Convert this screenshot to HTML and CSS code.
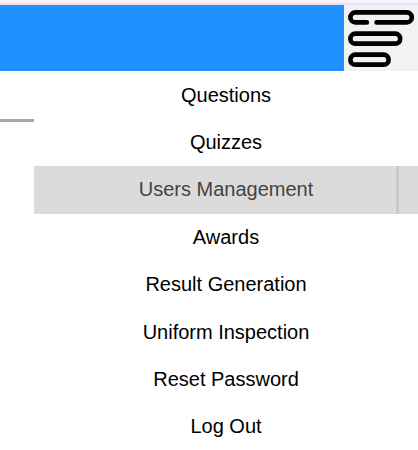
FILE: index.html
```html
<!DOCTYPE html>
<html lang="en">
<head>
<meta charset="utf-8">
<title>Menu</title>
<link rel="stylesheet" href="styles.css">
</head>
<body>
<div class="top-edge"></div>
<header class="header">
  <button class="menu-button" aria-label="Menu">
    <svg width="74" height="66" viewBox="344 5 74 66" fill="none" stroke="#000" stroke-width="4.7" stroke-linecap="round">
      <path d="M366.8 22.4H355.4A5 5 0 0 1 355.4 12.4H406.8A5 5 0 0 1 406.8 22.4H376.6"/>
      <rect x="350.4" y="33.7" width="49.8" height="10" rx="5"/>
      <rect x="350.4" y="54.7" width="38.2" height="10" rx="5"/>
    </svg>
  </button>
</header>
<main class="content">
  <div class="page"><div class="rule"></div></div>
  <nav class="menu">
    <a class="item">Questions</a>
    <a class="item">Quizzes</a>
    <a class="item active">Users Management</a>
    <a class="item">Awards</a>
    <a class="item">Result Generation</a>
    <a class="item">Uniform Inspection</a>
    <a class="item">Reset Password</a>
    <a class="item">Log Out</a>
  </nav>
</main>
</body>
</html>
```
FILE: styles.css
```css
* { box-sizing: border-box; }
body { margin: 0; height: 450px; overflow: hidden; background: #fff; font-family: "Liberation Sans", Arial, sans-serif; }
.top-edge { height: 5px; background: #faf3fd; border-bottom: 2px solid #e7dfea; }
.header { display: flex; justify-content: flex-end; height: 66px; background: #1e90ff; }
.menu-button { width: 74px; height: 66px; padding: 0; border: 0; background: #f2f2f4; }
.menu-button svg { display: block; }
.content { display: flex; }
.page { width: 34px; padding-top: 48px; }
.rule { height: 3px; background: #a6a6a6; }
.menu { flex: 1; }
.item { display: block; height: 47.33px; line-height: 48px; font-size: 20px; text-align: center; color: #000; }
.active { height: 48px; margin-bottom: -0.67px; line-height: 46.6px; color: #444; background: linear-gradient(90deg, transparent 362px, #cacaca 362px, #cacaca 365px, transparent 365px) #dbdbdb; }
```
